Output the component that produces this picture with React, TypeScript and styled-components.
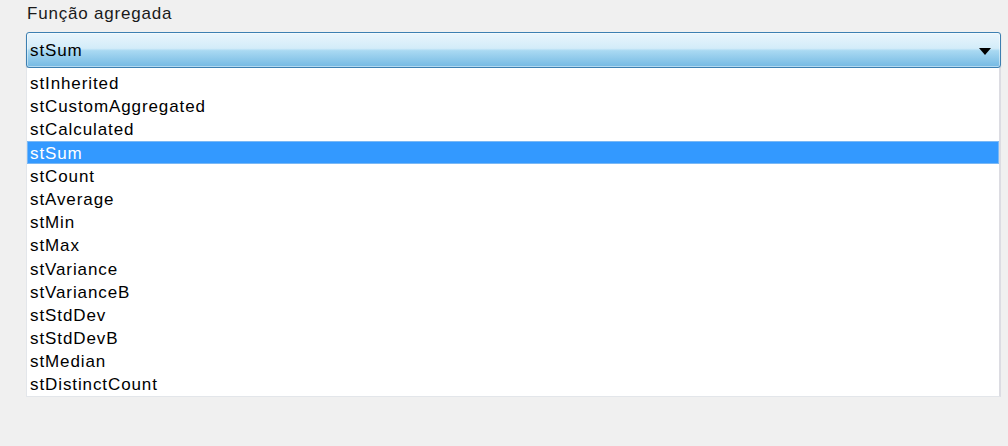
import React from 'react'
import styled, { createGlobalStyle } from 'styled-components'

const GlobalStyle = createGlobalStyle`
  html, body {
    margin: 0;
    padding: 0;
    background: #f0f0f0;
  }
  body {
    font-family: "Liberation Sans", Arial, sans-serif;
  }
`

const items = [
  'stInherited',
  'stCustomAggregated',
  'stCalculated',
  'stSum',
  'stCount',
  'stAverage',
  'stMin',
  'stMax',
  'stVariance',
  'stVarianceB',
  'stStdDev',
  'stStdDevB',
  'stMedian',
  'stDistinctCount',
]

const App = () => {
  const selected = 'stSum'
  return (
    <Page>
      <GlobalStyle />
      <Label>Função agregada</Label>
      <Combo>
        <ComboText>{selected}</ComboText>
        <Arrow viewBox="0 0 12 7">
          <path d="M0 0 H12 L6 7 Z" fill="#000" />
        </Arrow>
      </Combo>
      <List>
        {items.map((it) => (
          <Item key={it} active={it === selected}>
            {it}
          </Item>
        ))}
      </List>
    </Page>
  )
}

export default App

const Page = styled.div`
  width: 1008px;
  height: 446px;
  background: #f0f0f0;
  padding: 4px 0 0 26px;
  box-sizing: border-box;
  overflow: hidden;
`

const Label = styled.div`
  font-size: 17px;
  letter-spacing: 0.8px;
  color: #1a1a1a;
  line-height: 20px;
  padding-left: 1px;
  height: 28px;
`

const Combo = styled.div`
  width: 975px;
  height: 36px;
  box-sizing: border-box;
  border: 1px solid #3c7fb1;
  border-radius: 3px;
  background: linear-gradient(
    to bottom,
    #e9f5fc 0%,
    #d3ecf9 45%,
    #a9d9f2 52%,
    #74b9e3 100%
  );
  box-shadow: inset 0 0 0 1px rgba(255, 255, 255, 0.45), 0 1px 1px rgba(60, 90, 120, 0.35);
  display: flex;
  align-items: center;
  justify-content: space-between;
  padding: 1px 9px 0 3px;
`

const ComboText = styled.span`
  font-size: 17px;
  letter-spacing: 0.9px;
  color: #000;
`

const Arrow = styled.svg`
  width: 12px;
  height: 7px;
  margin-top: 1px;
`

const List = styled.div`
  width: 975px;
  height: 329px;
  box-sizing: border-box;
  background: #fff;
  border: 1px solid #e3e6ea;
  border-top: none;
  border-right: 2px solid #dcdce2;
  padding-top: 3px;
  display: flex;
  flex-direction: column;
`

const Item = styled.div<{ active?: boolean }>`
  height: 23.2px;
  flex-shrink: 0;
  font-size: 17px;
  letter-spacing: 0.9px;
  padding-left: 2px;
  box-sizing: border-box;
  color: ${({ active }) => (active ? '#fff' : '#000')};
  background: ${({ active }) => (active ? '#3399ff' : 'transparent')};
  border: 1px solid ${({ active }) => (active ? '#7ab8f5' : 'transparent')};
  line-height: 23px;
`
